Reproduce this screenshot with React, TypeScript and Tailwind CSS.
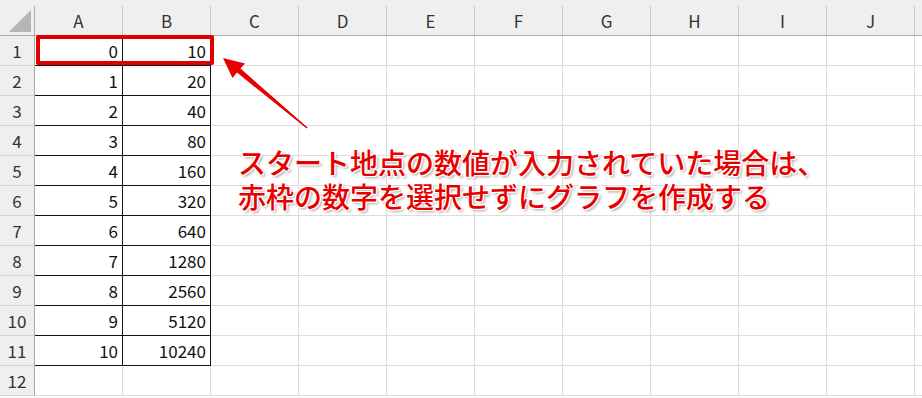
const COLS = ['A', 'B', 'C', 'D', 'E', 'F', 'G', 'H', 'I', 'J'];

const DATA: [number, number][] = [
  [0, 10],
  [1, 20],
  [2, 40],
  [3, 80],
  [4, 160],
  [5, 320],
  [6, 640],
  [7, 1280],
  [8, 2560],
  [9, 5120],
  [10, 10240],
];

const font = { fontFamily: '"Noto Sans CJK JP", "Noto Sans", sans-serif' };

function Arrow() {
  // tail (307,128) -> tip (223,58)
  return (
    <svg className="absolute left-0 top-0 pointer-events-none" width="922" height="398">
      <polygon
        points="223,58 245,63.5 240.5,68.5 307.6,127.6 306.6,128.6 237,72.6 232.5,78"
        fill="#e60000"
      />
    </svg>
  );
}

export default function App() {
  return (
    <div className="relative w-[922px] h-[398px] overflow-hidden bg-white" style={font}>
      {/* header strip */}
      <div className="h-[6px] bg-[#efefef]" />
      <div className="flex h-[30px] bg-[#efefef] border-b border-[#a9a9a9]">
        <div className="w-[35px] shrink-0 border-r border-[#a9a9a9] flex items-end justify-end pb-[3px] pr-[3px]">
          <div className="w-[22px] h-[22px] bg-[#b5b5b5] [clip-path:polygon(100%_0,100%_100%,0_100%)]" />
        </div>
        {COLS.map((c) => (
          <div
            key={c}
            className="w-[88px] shrink-0 border-r border-[#c8c8c8] flex items-center justify-center text-[17px] text-[#333]"
          >
            {c}
          </div>
        ))}
        <div className="flex-1" />
      </div>

      {Array.from({ length: 12 }, (_, r) => {
        const row = DATA[r];
        return (
          <div key={r} className="flex h-[30px]">
            <div className="w-[35px] shrink-0 bg-[#efefef] border-r border-b border-r-[#a9a9a9] border-b-[#d4d4d4] flex items-center justify-center text-[17px] text-[#333]">
              {r + 1}
            </div>
            {COLS.map((c, i) => {
              const boxed = row && i < 2;
              return (
                <div
                  key={c}
                  className={`w-[88px] shrink-0 border-b border-r flex items-center justify-end pr-[4px] text-[17px] text-[#111] ${
                    boxed ? 'border-[#111]' : 'border-[#dcdcdc]'
                  }`}
                >
                  {boxed ? row[i] : ''}
                </div>
              );
            })}
            <div className="flex-1 border-b border-[#dcdcdc]" />
          </div>
        );
      })}

      {/* selection highlight */}
      <div className="absolute left-[36px] top-[35px] w-[178px] h-[30px] border-[4px] border-[#e00000] rounded-[2px]" />

      <Arrow />

      <div className="absolute left-[238px] top-[145px] text-[28px] leading-[34px] font-medium text-[#e60000] whitespace-nowrap [text-shadow:0_0_2px_#fff,0_0_2px_#fff,1px_1px_0_#fff,-1px_-1px_0_#fff,1px_-1px_0_#fff,-1px_1px_0_#fff,2px_2px_3px_#9a9a9a]">
        <div>スタート地点の数値が入力されていた場合は、</div>
        <div>赤枠の数字を選択せずにグラフを作成する</div>
      </div>
    </div>
  );
}
